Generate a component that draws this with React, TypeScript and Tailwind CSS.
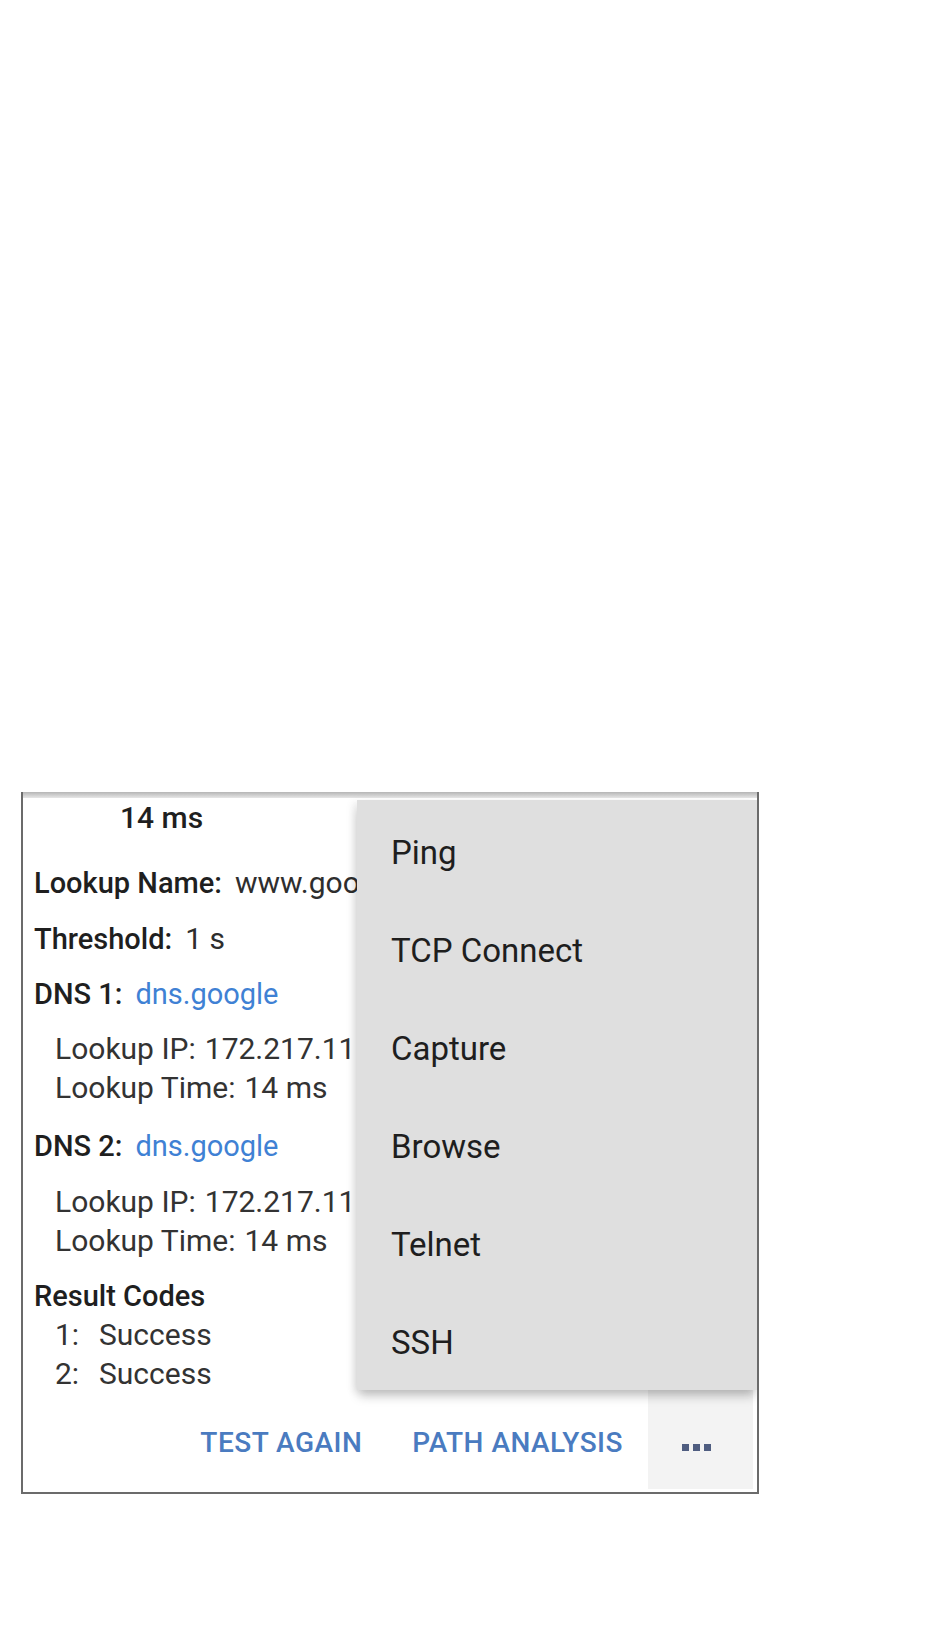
import React from 'react';

const menuItems = ['Ping', 'TCP Connect', 'Capture', 'Browse', 'Telnet', 'SSH'];

const Field = ({ label, value, link = false, className = '' }: { label: string; value: string; link?: boolean; className?: string }) => (
  <div className={`whitespace-nowrap ${className}`}>
    <span className="text-[29px] font-medium text-[#1f1f1f]">{label}</span>
    <span className={link ? 'ml-[13px] text-[29px] text-[#3f81d4]' : 'ml-[13px] text-[#2e2e2e]'}>{value}</span>
  </div>
);

const SubField = ({ label, value }: { label: string; value: string }) => (
  <div className="whitespace-nowrap ml-[21px] text-[#333333]">
    <span>{label}</span>
    <span className="ml-[9px]">{value}</span>
  </div>
);

const App = () => {
  return (
    <div className="min-h-[1642px] bg-white pt-[792px] pl-[21px] font-['Roboto',sans-serif]">
      <div className="relative w-[738px] h-[702px] bg-white border-x-2 border-b-2 border-[#6b6b6b] overflow-hidden">
        {/* top edge of the cropped screen */}
        <div className="h-[6px] bg-gradient-to-b from-[#b5b5b5] to-[#e6e6e6]" />

        <div className="pl-[11px] text-[30px] leading-[39px]">
          <div className="ml-[86px] font-medium text-[#1f1f1f]">14 ms</div>

          <Field label="Lookup Name:" value="www.google.com" className="mt-[26px]" />
          <Field label="Threshold:" value="1 s" className="mt-[16px]" />

          <Field label="DNS 1:" value="dns.google" link className="mt-[15px]" />
          <div className="mt-[15px]">
            <SubField label="Lookup IP:" value="172.217.11.36" />
            <SubField label="Lookup Time:" value="14 ms" />
          </div>

          <Field label="DNS 2:" value="dns.google" link className="mt-[19px]" />
          <div className="mt-[16px]">
            <SubField label="Lookup IP:" value="172.217.11.36" />
            <SubField label="Lookup Time:" value="14 ms" />
          </div>

          <div className="mt-[17px] text-[29px] font-medium text-[#1f1f1f]">Result Codes</div>
          <div className="leading-[38px] text-[#333333]">
            <div className="flex ml-[21px]">
              <span className="w-[44px]">1:</span>
              <span>Success</span>
            </div>
            <div className="flex ml-[21px] mt-[1px]">
              <span className="w-[44px]">2:</span>
              <span>Success</span>
            </div>
          </div>

          {/* action buttons */}
          <div className="-mt-[12px] h-[108px] flex justify-end text-[28px] leading-[36px] font-medium tracking-[0.5px] text-[#4a7bc0]">
            <span className="pt-[44px] mr-[50px]">TEST AGAIN</span>
            <span className="pt-[44px] mr-[25px]">PATH ANALYSIS</span>
            <div className="w-[105px] h-[108px] mr-[4px] bg-[#f3f3f3] flex gap-[4px] pl-[34px] pt-[63px]">
              <span className="w-[7px] h-[7px] bg-[#4f5d80]" />
              <span className="w-[7px] h-[7px] bg-[#4f5d80]" />
              <span className="w-[7px] h-[7px] bg-[#4f5d80]" />
            </div>
          </div>
        </div>

        {/* overflow menu */}
        <div className="absolute left-[334px] top-[8px] w-[400px] h-[590px] overflow-hidden bg-[#dfdfdf] shadow-[0_8px_10px_-2px_rgba(0,0,0,0.22),-4px_2px_8px_rgba(0,0,0,0.08)]">
          {menuItems.map((item) => (
            <div key={item} className="h-[98px] pt-[34px] pl-[34px] text-[33px] leading-[37px] text-[#1e1e1e]">
              {item}
            </div>
          ))}
        </div>
      </div>
    </div>
  );
};

export default App;
